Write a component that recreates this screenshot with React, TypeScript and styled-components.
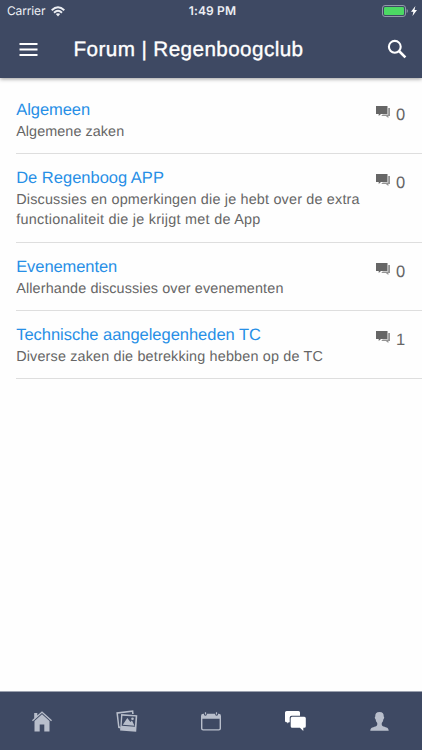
import React from "react";
import styled, { createGlobalStyle } from "styled-components";

const GlobalStyle = createGlobalStyle`
  *, *::before, *::after { box-sizing: border-box; }
  html, body { margin: 0; padding: 0; background: #fefefe; }
  body {
    font-family: "Liberation Sans", Arial, sans-serif;
    text-rendering: geometricPrecision;
    overflow: hidden;
  }
  svg { display: block; flex: none; }
`;

const Screen = styled.div`
  width: 422px;
  height: 750px;
  display: flex;
  flex-direction: column;
  background: #fefefe;
`;

const Header = styled.header`
  flex: none;
  height: 78px;
  background: #3e4963;
  color: #fff;
  box-shadow: 0 1px 4px rgba(0, 0, 0, 0.4);
`;

const StatusBar = styled.div`
  height: 22px;
  display: grid;
  grid-template-columns: 1fr auto 1fr;
  align-items: center;
  padding: 0 5px 0 7px;
  font: 500 12px/22px Inter, sans-serif;
  color: #eceef3;
`;

const Carrier = styled.div`
  display: flex;
  align-items: center;
  gap: 6px;
  font-weight: 400;
  letter-spacing: -0.15px;
`;

const Clock = styled.div`
  font-weight: 600;
  letter-spacing: 0.15px;
  padding-left: 1px;
`;

const Power = styled.div`
  display: flex;
  align-items: center;
  justify-content: flex-end;
  gap: 3px;
`;

const Toolbar = styled.div`
  height: 56px;
  display: flex;
  align-items: center;
  padding: 0 15px 2px 19px;
`;

const Title = styled.h1`
  flex: 1;
  margin: 1px 0 0 35.5px;
  font: 400 20.7px/28px "Liberation Sans", Arial, sans-serif;
  letter-spacing: 0.4px;
  -webkit-text-stroke: 0.35px currentColor;
  white-space: nowrap;
`;

const IconButton = styled.button`
  border: 0;
  padding: 0;
  background: none;
  color: inherit;
`;

const List = styled.main`
  flex: 1;
  padding: 8px 0 0 16px;
`;

const Row = styled.article<{ $tall?: boolean }>`
  height: ${(p) => (p.$tall ? 89 : 68)}px;
  display: flex;
  border-bottom: 1px solid #dedede;
  padding-top: 14px;
`;

const RowText = styled.div`
  flex: 1;
  padding-left: 0.2px;
  white-space: nowrap;
`;

const Topic = styled.h2<{ $spacing: number }>`
  margin: 0 0 2px;
  font-size: 16.5px;
  font-weight: 400;
  line-height: 20px;
  letter-spacing: ${(p) => p.$spacing}px;
  color: #278fe6;
`;

const Description = styled.p<{ $spacing: number }>`
  margin: 0;
  font-size: 14.4px;
  line-height: 20.4px;
  letter-spacing: ${(p) => p.$spacing}px;
  color: #666;
`;

const Replies = styled.div`
  flex: none;
  width: 46px;
  display: flex;
  gap: 6px;
  padding-top: 6px;
  color: #666;
`;

const Count = styled.span`
  font-size: 16.5px;
  line-height: 19px;
`;

const Tabs = styled.nav`
  flex: none;
  height: 59px;
  display: grid;
  grid-template-columns: repeat(5, 1fr);
  background: #3e4963;
  border-top: 1px solid #9ba1af;
`;

const Tab = styled.button<{ $active?: boolean }>`
  display: flex;
  align-items: center;
  justify-content: center;
  border: 0;
  padding: 0;
  background: none;
  color: ${(p) => (p.$active ? "#fff" : "#b8becb")};
`;

const WifiIcon = () => (
  <svg width="14" height="11" viewBox="0 0 14 11" fill="none" stroke="currentColor" strokeWidth="1.9">
    <path d="M.7 4.2Q7-1.7 13.3 4.2M3 6.7Q7 3 11 6.7" />
    <path d="M7 10.4 4.8 8.1Q7 6.3 9.2 8.1Z" fill="currentColor" stroke="none" />
  </svg>
);

const BatteryIcon = () => (
  <svg width="26" height="12" viewBox="0 0 26 12">
    <rect x=".5" y=".5" width="23" height="11" rx="2.5" fill="none" stroke="#9199a9" />
    <rect x="2" y="2" width="20" height="8" rx="1.2" fill="#4cd964" />
    <path d="M24.7 4v4q1.2-.6 1.2-2t-1.2-2" fill="#9199a9" />
  </svg>
);

const BoltIcon = () => (
  <svg width="6" height="10" viewBox="0 0 6 10">
    <path d="M4.4 0 0 5.7h2.4L1.5 10 6 4.1H3.5Z" fill="#fff" />
  </svg>
);

const MenuIcon = () => (
  <svg width="19" height="13" viewBox="0 0 19 13">
    <path d="M.5 0h18v2H.5zM.5 5.5h18v2H.5zM.5 11h18v2H.5z" fill="currentColor" />
  </svg>
);

const SearchIcon = () => (
  <svg width="20" height="20" viewBox="0 0 20 20" fill="none" stroke="currentColor">
    <circle cx="7.8" cy="7.8" r="5.9" strokeWidth="2.1" />
    <path d="m12 12 6.4 6.4" strokeWidth="2.6" />
  </svg>
);

const RepliesIcon = () => (
  <svg width="14" height="12" viewBox="0 0 14 12" fill="currentColor">
    <path d="M0 0h11.5v8H5L2.7 10V8H0z" />
    <path d="M12.2 2H14v8h-1.6v1.9L9.8 10H5.2l1.5-1.4h5.5z" opacity=".7" />
  </svg>
);

const HomeIcon = () => (
  <svg width="20" height="21" viewBox="0 0 20 21" fill="currentColor">
    <path d="M10 .2 20 9.2l-.9 1L10 2.1.9 10.2 0 9.2l2.2-2V2h3.1v2.5z" />
    <path d="m10 3.3 7.5 6.6v10.6h-5.2v-6.9H7.7v6.9H2.5V9.9z" />
  </svg>
);

const PhotosIcon = () => (
  <svg width="22" height="22" viewBox="0 0 22 22" fill="currentColor" fillRule="evenodd">
    <path d="m.3 2.2 17-2 .4 3.7h-1.6l-.2-1.9L2 3.8l1.4 12.4 1.2.7.2 1.7-2.6-.5z" />
    <path d="m5.1 4.1 16.2 1.2-1.1 16.4-16.1-1.2 1-16.4Zm1.3 1.6-.7 10.1 13.2 1 .7-10.2z" />
    <path d="m6.8 14.8 4.5-6.9 3.1 4.2 1.6-1.7 2.5 5.3z" />
    <circle cx="16.5" cy="8.8" r="1.3" />
  </svg>
);

const CalendarIcon = () => (
  <svg width="20" height="19" viewBox="0 0 20 19" fill="currentColor">
    <path
      fillRule="evenodd"
      d="M2.2 1.8H3v1.1q1.4 1.6 2.8 0V1.8h8.4v1.1q1.4 1.6 2.8 0V1.8h.8Q20 1.8 20 4v12.6q0 2-2.2 2H2.2q-2.2 0-2.2-2V4q0-2.2 2.2-2.2ZM1.4 6.8v9.5q0 .9.9.9h15.4q.9 0 .9-.9V6.8z"
    />
    <path d="M3.9.2h1.2v2.4H3.9zM14.9.2h1.2v2.4h-1.2z" />
  </svg>
);

const ChatIcon = () => (
  <svg width="21" height="20" viewBox="0 0 21 20" fill="currentColor">
    <path d="M1.7 0h11.8q1.5 0 1.5 1.5v3.2H6.6Q4.7 4.7 4.7 6.6v4.7H3.8l-1.5 1.2v-1.2H1.5Q0 11.3 0 9.8V1.5Q0 0 1.7 0Z" />
    <path d="M7.2 5.8h12.1q1.5 0 1.5 1.5v7.9q0 1.5-1.5 1.5h-1V20l-3.4-3.3H7.2q-1.5 0-1.5-1.5V7.3q0-1.5 1.5-1.5Z" />
  </svg>
);

const PersonIcon = () => (
  <svg width="19" height="19" viewBox="0 0 19 19" fill="currentColor">
    <path d="M9.5 0c3.2 0 4.5 2 4.2 4.6 1 .4.3 2.4-.4 2.9-.2 1.8-.9 2.8-1.5 3.4-.3 2 .1 3.1 1.7 3.6 3.2 1 5 1.2 5.2 4.2H.3c.2-3 2-3.2 5.2-4.2 1.6-.5 2-1.6 1.7-3.6-.6-.6-1.3-1.6-1.5-3.4-.7-.5-1.4-2.5-.4-2.9C5 2 6.3 0 9.5 0Z" />
  </svg>
);

interface Forum {
  name: string;
  nameSpacing: number;
  lines: { text: string; spacing: number }[];
  replies: number;
}

const forums: Forum[] = [
  { name: "Algemeen", nameSpacing: -0.05, lines: [{ text: "Algemene zaken", spacing: 0.06 }], replies: 0 },
  {
    name: "De Regenboog APP",
    nameSpacing: 0,
    lines: [
      { text: "Discussies en opmerkingen die je hebt over de extra", spacing: 0.18 },
      { text: "functionaliteit die je krijgt met de App", spacing: 0.27 },
    ],
    replies: 0,
  },
  { name: "Evenementen", nameSpacing: -0.08, lines: [{ text: "Allerhande discussies over evenementen", spacing: 0.13 }], replies: 0 },
  {
    name: "Technische aangelegenheden TC",
    nameSpacing: -0.03,
    lines: [{ text: "Diverse zaken die betrekking hebben op de TC", spacing: 0.16 }],
    replies: 1,
  },
];

export default function App() {
  return (
    <Screen>
      <GlobalStyle />
      <Header>
        <StatusBar>
          <Carrier>Carrier<WifiIcon /></Carrier>
          <Clock>1:49 PM</Clock>
          <Power><BatteryIcon /><BoltIcon /></Power>
        </StatusBar>
        <Toolbar>
          <IconButton aria-label="Menu"><MenuIcon /></IconButton>
          <Title>Forum | Regenboogclub</Title>
          <IconButton aria-label="Zoeken"><SearchIcon /></IconButton>
        </Toolbar>
      </Header>
      <List>
        {forums.map((forum) => (
          <Row key={forum.name} $tall={forum.lines.length > 1}>
            <RowText>
              <Topic $spacing={forum.nameSpacing}>{forum.name}</Topic>
              {forum.lines.map((line) => (
                <Description key={line.text} $spacing={line.spacing}>{line.text}</Description>
              ))}
            </RowText>
            <Replies>
              <RepliesIcon />
              <Count>{forum.replies}</Count>
            </Replies>
          </Row>
        ))}
      </List>
      <Tabs>
        <Tab aria-label="Home"><HomeIcon /></Tab>
        <Tab aria-label="Foto's"><PhotosIcon /></Tab>
        <Tab aria-label="Agenda"><CalendarIcon /></Tab>
        <Tab aria-label="Forum" $active><ChatIcon /></Tab>
        <Tab aria-label="Profiel"><PersonIcon /></Tab>
      </Tabs>
    </Screen>
  );
}
